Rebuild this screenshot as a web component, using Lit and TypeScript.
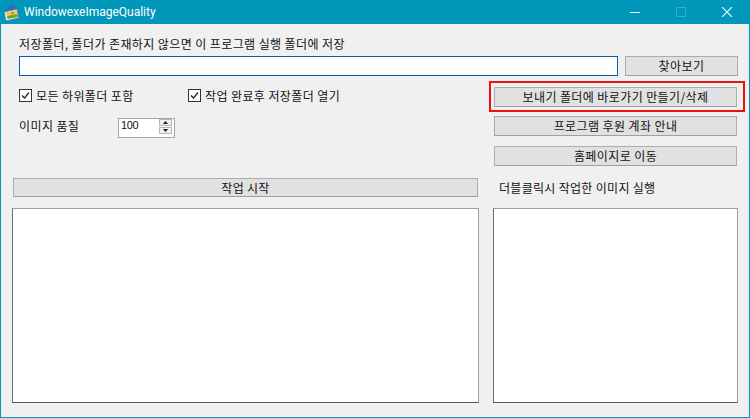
import { LitElement, html, css, svg } from "lit";
import { customElement } from "lit/decorators.js";

@customElement("app-root")
export class AppRoot extends LitElement {
  static styles = css`
    :host {
      display: block;
      width: 750px;
      height: 418px;
      box-sizing: border-box;
      background: #f0f0f0;
      border: 1px solid #0097ba;
      border-top: 0;
      font-family: "Noto Sans CJK KR", "Liberation Sans", sans-serif;
      font-size: 12px;
      letter-spacing: 0.4px;
      color: #111;
      overflow: hidden;
    }
    .title {
      height: 24px;
      margin: 0 -1px;
      background: #0097ba;
      display: flex;
      align-items: center;
      color: #fff;
      font-family: "Roboto", "Liberation Sans", sans-serif;
      font-size: 12px;
      letter-spacing: 0;
    }
    .app-icon { margin-left: 3px; margin-right: 4px; flex: none; }
    .title-text { flex: 1; }
    .wb { width: 46px; height: 24px; display: flex; align-items: center; justify-content: center; }
    .body { padding: 0 11px 0 11px; }
    .top { padding: 11px 0 0 7px; }
    .top-label { height: 21px; line-height: 18px; }
    .path-row { display: flex; gap: 7px; }
    .path {
      flex: none;
      width: 599px;
      height: 20px;
      box-sizing: border-box;
      background: #fff;
      border: 1px solid #0a5fa8;
    }
    .btn {
      box-sizing: border-box;
      display: flex;
      align-items: center;
      justify-content: center;
      background: #e1e1e1;
      border: 1px solid #adadad;
      border-bottom-color: #a0a0a0;
      height: 20px;
      line-height: 1;
      color: #111;
    }
    .browse { width: 113px; }
    .columns { display: flex; margin-top: 11px; }
    .left { flex: none; width: 468px; display: flex; flex-direction: column; }
    .right { flex: none; width: 245px; margin-left: 13px; display: flex; flex-direction: column; }
    .options { display: flex; padding-left: 7px; height: 17px; align-items: center; }
    .check { display: flex; align-items: center; gap: 4px; }
    .check.first { width: 169px; }
    .box { width: 13px; height: 13px; box-sizing: border-box; border: 1px solid #333; background: #fff; display: block; flex: none; }
    .quality { display: flex; align-items: flex-start; padding-left: 7px; margin-top: 14px; height: 20px; }
    .quality-label { width: 99px; flex: none; line-height: 15px; }
    .spin {
      box-sizing: border-box;
      width: 57px;
      height: 20px;
      background: #fff;
      border: 1px solid #a5a5a5;
      display: flex;
      align-items: flex-start;
      justify-content: space-between;
    }
    .spin-value { padding-left: 2px; font-family: "Liberation Sans", sans-serif; font-size: 11px; letter-spacing: -0.4px; line-height: 13px; }
    .arrows { width: 13px; margin-right: 2px; display: flex; flex-direction: column; gap: 1px; }
    .arrow { background: #f0f0f0; border: 1px solid #b8b8b8; box-sizing: border-box; height: 7px; display: flex; align-items: center; justify-content: center; }
    .start { margin: 40px 0 0 1px; width: 465px; height: 19px; letter-spacing: 0.3px; }
    .list { box-sizing: border-box; background: #fff; border: 1px solid; border-color: #a0a0a0 #a0a0a0 #55585f #6d6d6d; }
    .list-left { margin-top: 11px; width: 467px; height: 195px; }
    .actions { display: flex; flex-direction: column; gap: 9px; padding-left: 1px; }
    .actions .btn { width: 243px; }
    .actions .home { margin-top: 1px; }
    .highlighted { position: relative; }
    .highlight {
      position: absolute;
      left: -5px; top: -6px; right: -7px; bottom: -5px;
      border: 2px solid #ee1111;
      pointer-events: none;
    }
    .dbl { margin: 13px 0 0 6px; height: 18px; line-height: 18px; letter-spacing: 0.3px; }
    .list-right { margin-top: 11px; width: 245px; height: 195px; }
  `;

  private checkbox() {
    return html`<svg class="box" viewBox="0 0 11 11" width="13" height="13">
      <path d="M2 5.5 L4.5 8 L9 2.5" fill="none" stroke="#222" stroke-width="1.2"></path>
    </svg>`;
  }

  render() {
    return html`
      <div class="title">
        <svg class="app-icon" width="17" height="18" viewBox="0 0 17 18">
          <path d="M2 7 L9 1 L14 4 L13 9 Z" fill="#2a6fc0"></path>
          <path d="M1 9 L14 6 L16 15 L3 18 Z" fill="#dfe8f2" stroke="#3c78b8" stroke-width="0.8"></path>
          <path d="M3 9.5 L13.5 7.5 L14.5 11 L4 13 Z" fill="#f4c93c"></path>
          <path d="M4 13 L14.5 11 L15 14 L4.7 16 Z" fill="#5da83a"></path>
          <circle cx="9.5" cy="10" r="1.2" fill="#e9672c"></circle>
        </svg>
        <span class="title-text">WindowexeImageQuality</span>
        <div class="wb">
          ${svg`<svg width="10" height="10" viewBox="0 0 10 10"><path d="M0 5.5 H10" stroke="#fff" stroke-width="1"></path></svg>`}
        </div>
        <div class="wb">
          ${svg`<svg width="10" height="10" viewBox="0 0 10 10"><rect x="0.5" y="0.5" width="9" height="9" fill="none" stroke="#2fb0cd" stroke-width="1"></rect></svg>`}
        </div>
        <div class="wb">
          ${svg`<svg width="10" height="10" viewBox="0 0 10 10"><path d="M0 0 L10 10 M10 0 L0 10" stroke="#fff" stroke-width="1.1"></path></svg>`}
        </div>
      </div>
      <div class="body">
        <div class="top">
          <div class="top-label">저장폴더, 폴더가 존재하지 않으면 이 프로그램 실행 폴더에 저장</div>
          <div class="path-row">
            <div class="path"></div>
            <div class="btn browse">찾아보기</div>
          </div>
        </div>
        <div class="columns">
          <div class="left">
            <div class="options">
              <label class="check first">${this.checkbox()}<span>모든 하위폴더 포함</span></label>
              <label class="check">${this.checkbox()}<span>작업 완료후 저장폴더 열기</span></label>
            </div>
            <div class="quality">
              <span class="quality-label">이미지 품질</span>
              <div class="spin">
                <span class="spin-value">100</span>
                <div class="arrows">
                  <div class="arrow"><svg width="7" height="3" viewBox="0 0 7 4"><path d="M3.5 0 L7 4 H0 Z" fill="#222"></path></svg></div>
                  <div class="arrow"><svg width="7" height="3" viewBox="0 0 7 4"><path d="M0 0 H7 L3.5 4 Z" fill="#222"></path></svg></div>
                </div>
              </div>
            </div>
            <div class="btn start">작업 시작</div>
            <div class="list list-left"></div>
          </div>
          <div class="right">
            <div class="actions">
              <div class="highlighted">
                <div class="btn">보내기 폴더에 바로가기 만들기/삭제</div>
                <div class="highlight"></div>
              </div>
              <div class="btn">프로그램 후원 계좌 안내</div>
              <div class="btn home">홈페이지로 이동</div>
            </div>
            <div class="dbl">더블클릭시 작업한 이미지 실행</div>
            <div class="list list-right"></div>
          </div>
        </div>
      </div>
    `;
  }
}
